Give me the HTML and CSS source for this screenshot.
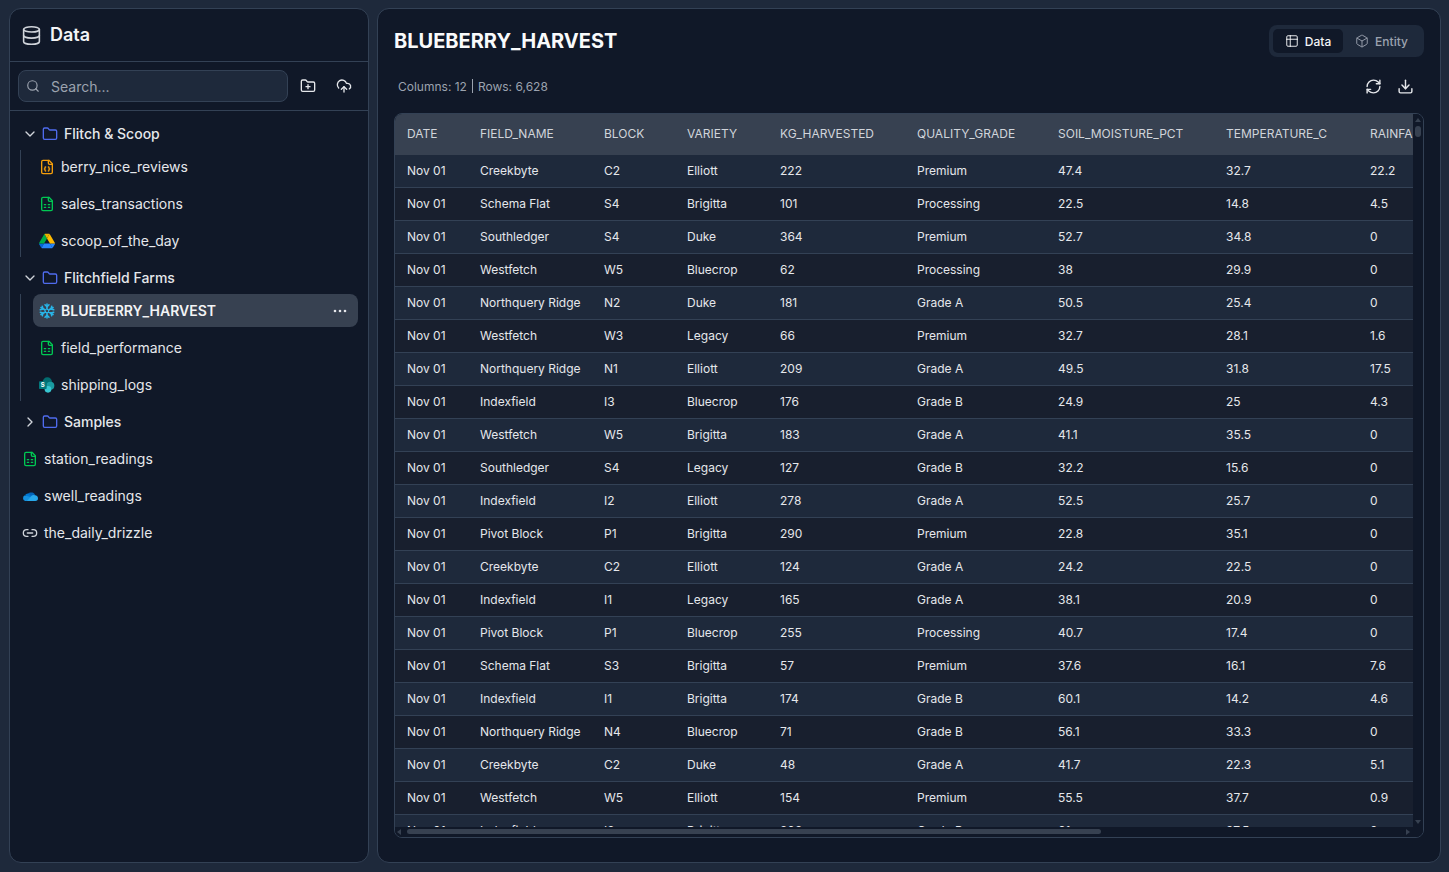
FILE: index.html
```html
<!DOCTYPE html>
<html lang="en">
<head>
<meta charset="utf-8">
<title>Data</title>
<link rel="stylesheet" href="styles.css">
</head>
<body>
<aside class="sidebar">
  <header class="side-head">
    <svg class="ico ico-title" viewBox="0 0 24 24"><ellipse cx="12" cy="5" rx="9" ry="3"/><path d="M3 5V19A9 3 0 0 0 21 19V5"/><path d="M3 12A9 3 0 0 0 21 12"/></svg>
    <h2>Data</h2>
  </header>
  <div class="search-row">
    <label class="search">
      <svg class="ico ico-search" viewBox="0 0 24 24"><circle cx="11" cy="11" r="8"/><path d="m21 21-4.3-4.3"/></svg>
      <input type="text" placeholder="Search...">
    </label>
    <button class="icon-btn"><svg class="ico ico-18" viewBox="0 0 24 24"><path d="M12 10v6"/><path d="M9 13h6"/><path d="M20 20a2 2 0 0 0 2-2V8a2 2 0 0 0-2-2h-7.9a2 2 0 0 1-1.69-.9L9.6 3.9A2 2 0 0 0 7.93 3H4a2 2 0 0 0-2 2v13a2 2 0 0 0 2 2Z"/></svg></button>
    <button class="icon-btn"><svg class="ico ico-18" viewBox="0 0 24 24"><path d="M12 13v8"/><path d="M4 14.899A7 7 0 1 1 15.71 8h1.79a4.5 4.5 0 0 1 2.5 8.242"/><path d="m8 17 4-4 4 4"/></svg></button>
  </div>
  <nav class="tree">
    <div class="row folder">
      <svg class="ico ico-chev" viewBox="0 0 24 24"><path d="m6 9 6 6 6-6"/></svg>
      <svg class="ico ico-folder" viewBox="0 0 24 24"><path d="M20 20a2 2 0 0 0 2-2V8a2 2 0 0 0-2-2h-7.9a2 2 0 0 1-1.69-.9L9.6 3.9A2 2 0 0 0 7.93 3H4a2 2 0 0 0-2 2v13a2 2 0 0 0 2 2Z"/></svg>
      <span>Flitch &amp; Scoop</span>
    </div>
    <div class="children">
      <div class="row leaf">
        <svg class="ico ico-json" viewBox="0 0 24 24"><path d="M15 2H6a2 2 0 0 0-2 2v16a2 2 0 0 0 2 2h12a2 2 0 0 0 2-2V7Z"/><path d="M14 2v4a2 2 0 0 0 2 2h4"/><path d="M10 12a1 1 0 0 0-1 1v1a1 1 0 0 1-1 1 1 1 0 0 1 1 1v1a1 1 0 0 0 1 1"/><path d="M14 18a1 1 0 0 0 1-1v-1a1 1 0 0 1 1-1 1 1 0 0 1-1-1v-1a1 1 0 0 0-1-1"/></svg>
        <span>berry_nice_reviews</span>
      </div>
      <div class="row leaf">
        <svg class="ico ico-sheet" viewBox="0 0 24 24"><path d="M15 2H6a2 2 0 0 0-2 2v16a2 2 0 0 0 2 2h12a2 2 0 0 0 2-2V7Z"/><path d="M14 2v4a2 2 0 0 0 2 2h4"/><path d="M8 13h2"/><path d="M14 13h2"/><path d="M8 17h2"/><path d="M14 17h2"/></svg>
        <span>sales_transactions</span>
      </div>
      <div class="row leaf">
        <svg class="logo" viewBox="0 0 87.3 78"><path d="M6.6 66.85l3.85 6.65c.8 1.4 1.95 2.5 3.3 3.3L27.5 53H0c0 1.55.4 3.1 1.2 4.5z" fill="#0066da"/><path d="M43.65 25L29.9 1.2c-1.35.8-2.5 1.9-3.3 3.3l-25.4 44A9.06 9.06 0 0 0 0 53h27.5z" fill="#00ac47"/><path d="M59.8 53H27.5L13.75 76.8c1.35.8 2.9 1.2 4.5 1.2h50.8c1.6 0 3.15-.45 4.5-1.2z" fill="#2684fc"/><path d="M73.55 76.8c1.35-.8 2.5-1.9 3.3-3.3l9.25-16c.8-1.4 1.2-2.95 1.2-4.5H59.8z" fill="#2684fc"/><path d="M43.65 25L57.4 1.2C56.05.4 54.5 0 52.9 0H34.4c-1.6 0-3.15.45-4.5 1.2z" fill="#e8b100"/><path d="M73.4 26.5l-12.7-22c-.8-1.4-1.95-2.5-3.3-3.3L43.65 25 59.8 53h27.45c0-1.55-.4-3.1-1.2-4.5z" fill="#ffba00"/></svg>
        <span>scoop_of_the_day</span>
      </div>
    </div>
    <div class="row folder">
      <svg class="ico ico-chev" viewBox="0 0 24 24"><path d="m6 9 6 6 6-6"/></svg>
      <svg class="ico ico-folder" viewBox="0 0 24 24"><path d="M20 20a2 2 0 0 0 2-2V8a2 2 0 0 0-2-2h-7.9a2 2 0 0 1-1.69-.9L9.6 3.9A2 2 0 0 0 7.93 3H4a2 2 0 0 0-2 2v13a2 2 0 0 0 2 2Z"/></svg>
      <span>Flitchfield Farms</span>
    </div>
    <div class="children">
      <div class="row leaf selected">
        <svg class="logo snow" viewBox="0 0 24 24"><path d="M12 1.5v21M2.9 6.75l18.2 10.5M2.9 17.25l18.2-10.5"/><path d="M9 2.6l3 3 3-3M9 21.4l3-3 3 3M1.9 10.1l4.1-1.1-1.1-4.1M22.1 13.9l-4.1 1.1 1.1 4.1M4.9 19.1l1.1-4.1-4.1-1.1M19.1 4.9l-1.1 4.1 4.1 1.1"/><path class="snow-core" d="M12 9l3 3-3 3-3-3z"/></svg>
        <span>BLUEBERRY_HARVEST</span>
        <svg class="dots" viewBox="0 0 16 16"><circle cx="3" cy="8" r="1.3"/><circle cx="8" cy="8" r="1.3"/><circle cx="13" cy="8" r="1.3"/></svg>
      </div>
      <div class="row leaf">
        <svg class="ico ico-sheet" viewBox="0 0 24 24"><path d="M15 2H6a2 2 0 0 0-2 2v16a2 2 0 0 0 2 2h12a2 2 0 0 0 2-2V7Z"/><path d="M14 2v4a2 2 0 0 0 2 2h4"/><path d="M8 13h2"/><path d="M14 13h2"/><path d="M8 17h2"/><path d="M14 17h2"/></svg>
        <span>field_performance</span>
      </div>
      <div class="row leaf">
        <svg class="logo" viewBox="0 0 24 24"><circle cx="12.5" cy="7.5" r="7" fill="#036c70"/><circle cx="17" cy="13" r="6" fill="#1a9ba1"/><circle cx="13.5" cy="18.5" r="5" fill="#37c6d0"/><rect x="0" y="6.5" width="11.5" height="11.5" rx="1.2" fill="#03787c"/><text class="sp-s" x="5.75" y="15.6" text-anchor="middle">S</text></svg>
        <span>shipping_logs</span>
      </div>
    </div>
    <div class="row folder closed">
      <svg class="ico ico-chev" viewBox="0 0 24 24"><path d="m9 18 6-6-6-6"/></svg>
      <svg class="ico ico-folder" viewBox="0 0 24 24"><path d="M20 20a2 2 0 0 0 2-2V8a2 2 0 0 0-2-2h-7.9a2 2 0 0 1-1.69-.9L9.6 3.9A2 2 0 0 0 7.93 3H4a2 2 0 0 0-2 2v13a2 2 0 0 0 2 2Z"/></svg>
      <span>Samples</span>
    </div>
    <div class="row leaf">
      <svg class="ico ico-sheet" viewBox="0 0 24 24"><path d="M15 2H6a2 2 0 0 0-2 2v16a2 2 0 0 0 2 2h12a2 2 0 0 0 2-2V7Z"/><path d="M14 2v4a2 2 0 0 0 2 2h4"/><path d="M8 13h2"/><path d="M14 13h2"/><path d="M8 17h2"/><path d="M14 17h2"/></svg>
      <span>station_readings</span>
    </div>
    <div class="row leaf">
      <svg class="logo" viewBox="0 0 24 16"><path d="M9.5 4.2A6.4 6.4 0 0 1 20 7.6L14 12 7 8.5z" fill="#0364b8"/><path d="M7.2 4.6A5 5 0 0 0 4.9 6.3L10 12l5.5-2.6-6-5.2a5 5 0 0 0-2.3.4z" fill="#0078d4"/><path d="M4.5 7A4.5 4.5 0 0 0 4.6 15.5H9L13 10z" fill="#1490df"/><path d="M19 7a5.4 5.4 0 0 0-6.3 2.4L7.4 15.5H20a4 4 0 0 0 4-4 4.5 4.5 0 0 0-5-4.5z" fill="#28a8ea"/></svg>
      <span>swell_readings</span>
    </div>
    <div class="row leaf">
      <svg class="ico ico-link" viewBox="0 0 24 24"><path d="M9 17H7A5 5 0 0 1 7 7h2"/><path d="M15 7h2a5 5 0 1 1 0 10h-2"/><path d="M8 12h8"/></svg>
      <span>the_daily_drizzle</span>
    </div>
  </nav>
</aside>

<main class="main">
  <header class="main-head">
    <h1>BLUEBERRY_HARVEST</h1>
    <div class="tabs">
      <button class="tab active"><svg class="ico ico-14" viewBox="0 0 24 24"><path d="M9 3H5a2 2 0 0 0-2 2v4m6-6h10a2 2 0 0 1 2 2v4M9 3v18m0 0h10a2 2 0 0 0 2-2V9M9 21H5a2 2 0 0 1-2-2V9m0 0h18"/></svg>Data</button>
      <button class="tab"><svg class="ico ico-14" viewBox="0 0 24 24"><path d="M21 8a2 2 0 0 0-1-1.73l-7-4a2 2 0 0 0-2 0l-7 4A2 2 0 0 0 3 8v8a2 2 0 0 0 1 1.73l7 4a2 2 0 0 0 2 0l7-4A2 2 0 0 0 21 16Z"/><path d="m3.3 7 8.7 5 8.7-5"/><path d="M12 22V12"/></svg>Entity</button>
    </div>
  </header>
  <div class="meta">
    <p class="stats"><span>Columns: 12</span><i class="sep"></i><span>Rows: 6,628</span></p>
    <div class="actions">
      <button class="icon-btn"><svg class="ico ico-18" viewBox="0 0 24 24"><path d="M3 12a9 9 0 0 1 9-9 9.75 9.75 0 0 1 6.74 2.74L21 8"/><path d="M21 3v5h-5"/><path d="M21 12a9 9 0 0 1-9 9 9.75 9.75 0 0 1-6.74-2.74L3 16"/><path d="M8 16H3v5"/></svg></button>
      <button class="icon-btn"><svg class="ico ico-18" viewBox="0 0 24 24"><path d="M21 15v4a2 2 0 0 1-2 2H5a2 2 0 0 1-2-2v-4"/><path d="m7 10 5 5 5-5"/><path d="M12 15V3"/></svg></button>
    </div>
  </div>
  <div class="table-wrap">
    <div class="viewport">
    <table>
      <thead>
        <tr><th>DATE</th><th>FIELD_NAME</th><th>BLOCK</th><th>VARIETY</th><th>KG_HARVESTED</th><th>QUALITY_GRADE</th><th>SOIL_MOISTURE_PCT</th><th>TEMPERATURE_C</th><th>RAINFALL_MM</th></tr>
      </thead>
      <tbody>
        <tr><td>Nov 01</td><td>Creekbyte</td><td>C2</td><td>Elliott</td><td>222</td><td>Premium</td><td>47.4</td><td>32.7</td><td>22.2</td></tr>
        <tr><td>Nov 01</td><td>Schema Flat</td><td>S4</td><td>Brigitta</td><td>101</td><td>Processing</td><td>22.5</td><td>14.8</td><td>4.5</td></tr>
        <tr><td>Nov 01</td><td>Southledger</td><td>S4</td><td>Duke</td><td>364</td><td>Premium</td><td>52.7</td><td>34.8</td><td>0</td></tr>
        <tr><td>Nov 01</td><td>Westfetch</td><td>W5</td><td>Bluecrop</td><td>62</td><td>Processing</td><td>38</td><td>29.9</td><td>0</td></tr>
        <tr><td>Nov 01</td><td>Northquery Ridge</td><td>N2</td><td>Duke</td><td>181</td><td>Grade A</td><td>50.5</td><td>25.4</td><td>0</td></tr>
        <tr><td>Nov 01</td><td>Westfetch</td><td>W3</td><td>Legacy</td><td>66</td><td>Premium</td><td>32.7</td><td>28.1</td><td>1.6</td></tr>
        <tr><td>Nov 01</td><td>Northquery Ridge</td><td>N1</td><td>Elliott</td><td>209</td><td>Grade A</td><td>49.5</td><td>31.8</td><td>17.5</td></tr>
        <tr><td>Nov 01</td><td>Indexfield</td><td>I3</td><td>Bluecrop</td><td>176</td><td>Grade B</td><td>24.9</td><td>25</td><td>4.3</td></tr>
        <tr><td>Nov 01</td><td>Westfetch</td><td>W5</td><td>Brigitta</td><td>183</td><td>Grade A</td><td>41.1</td><td>35.5</td><td>0</td></tr>
        <tr><td>Nov 01</td><td>Southledger</td><td>S4</td><td>Legacy</td><td>127</td><td>Grade B</td><td>32.2</td><td>15.6</td><td>0</td></tr>
        <tr><td>Nov 01</td><td>Indexfield</td><td>I2</td><td>Elliott</td><td>278</td><td>Grade A</td><td>52.5</td><td>25.7</td><td>0</td></tr>
        <tr><td>Nov 01</td><td>Pivot Block</td><td>P1</td><td>Brigitta</td><td>290</td><td>Premium</td><td>22.8</td><td>35.1</td><td>0</td></tr>
        <tr><td>Nov 01</td><td>Creekbyte</td><td>C2</td><td>Elliott</td><td>124</td><td>Grade A</td><td>24.2</td><td>22.5</td><td>0</td></tr>
        <tr><td>Nov 01</td><td>Indexfield</td><td>I1</td><td>Legacy</td><td>165</td><td>Grade A</td><td>38.1</td><td>20.9</td><td>0</td></tr>
        <tr><td>Nov 01</td><td>Pivot Block</td><td>P1</td><td>Bluecrop</td><td>255</td><td>Processing</td><td>40.7</td><td>17.4</td><td>0</td></tr>
        <tr><td>Nov 01</td><td>Schema Flat</td><td>S3</td><td>Brigitta</td><td>57</td><td>Premium</td><td>37.6</td><td>16.1</td><td>7.6</td></tr>
        <tr><td>Nov 01</td><td>Indexfield</td><td>I1</td><td>Brigitta</td><td>174</td><td>Grade B</td><td>60.1</td><td>14.2</td><td>4.6</td></tr>
        <tr><td>Nov 01</td><td>Northquery Ridge</td><td>N4</td><td>Bluecrop</td><td>71</td><td>Grade B</td><td>56.1</td><td>33.3</td><td>0</td></tr>
        <tr><td>Nov 01</td><td>Creekbyte</td><td>C2</td><td>Duke</td><td>48</td><td>Grade A</td><td>41.7</td><td>22.3</td><td>5.1</td></tr>
        <tr><td>Nov 01</td><td>Westfetch</td><td>W5</td><td>Elliott</td><td>154</td><td>Premium</td><td>55.5</td><td>37.7</td><td>0.9</td></tr>
        <tr><td>Nov 01</td><td>Indexfield</td><td>I2</td><td>Brigitta</td><td>202</td><td>Grade B</td><td>61</td><td>27.5</td><td>0</td></tr>
      </tbody>
    </table>
    </div>
    <div class="vbar"><i class="arrow up"></i><div class="vtrack"><i class="vthumb"></i></div><i class="arrow down"></i></div>
    <div class="hbar"><i class="arrow left"></i><div class="htrack"><i class="hthumb"></i></div><i class="arrow right"></i></div>
    <div class="corner"></div>
  </div>
</main>
</body>
</html>
```
FILE: styles.css
```css
* { box-sizing: border-box; }
html, body { height: 100%; margin: 0; }
body {
  display: flex;
  gap: 8px;
  padding: 8px 8px 9px 9px;
  background: #1e293b;
  color: #e5e7eb;
  font-family: Inter, "Liberation Sans", sans-serif;
  overflow: hidden;
}
h1, h2, p { margin: 0; }
button { font: inherit; color: inherit; background: none; border: 0; padding: 0; cursor: pointer; }
.ico { fill: none; stroke: currentColor; stroke-width: 2; stroke-linecap: round; stroke-linejoin: round; flex: none; }
.ico-18 { width: 18px; height: 18px; }
.ico-14 { width: 14px; height: 14px; stroke-width: 1.6; }
.logo { width: 16px; height: 16px; flex: none; }

.sidebar {
  width: 360px;
  flex: none;
  display: flex;
  flex-direction: column;
  background: #101828;
  border: 1px solid #334155;
  border-radius: 12px;
}
.side-head {
  height: 53px;
  display: flex;
  align-items: center;
  gap: 8px;
  padding: 0 11px 2px;
  border-bottom: 1px solid #334155;
}
.ico-title { width: 21px; height: 21px; margin-top: 2px; color: #d1d5db; stroke-width: 1.8; }
.side-head h2 { font-size: 18px; font-weight: 600; color: #f3f4f6; }
.search-row {
  height: 49px;
  display: flex;
  align-items: center;
  padding: 0 6px 0 8px;
  border-bottom: 1px solid #334155;
}
.search {
  width: 270px;
  height: 32px;
  display: flex;
  align-items: center;
  padding: 0 7px;
  background: #1e293b;
  border: 1px solid #334155;
  border-radius: 8px;
  margin-right: 2px;
}
.ico-search { width: 14px; height: 14px; color: #9ca3af; }
.search input {
  flex: 1;
  min-width: 0;
  margin-left: 11px;
  padding: 0;
  background: none;
  border: 0;
  outline: 0;
  color: #e5e7eb;
  font: 14px Inter, "Liberation Sans", sans-serif;
}
.search input::placeholder { color: #9ca3af; opacity: 1; }
.icon-btn { width: 36px; height: 32px; display: flex; align-items: center; justify-content: center; color: #e5e7eb; }
.search-row .icon-btn svg { width: 16px; height: 16px; }

.tree { padding: 6px 10px 0 6px; font-size: 14px; }
.row { height: 33px; display: flex; align-items: center; border-radius: 8px; padding-left: 6px; color: #e5e7eb; margin-bottom: 4px; }
.folder { margin-bottom: 0; font-weight: 500; }
.folder.closed { margin-bottom: 4px; }
.ico-chev { width: 16px; height: 16px; margin-right: 4px; color: #d1d5db; }
.ico-folder { width: 16px; height: 16px; margin-right: 6px; color: #4f6bed; stroke-width: 2; }
.leaf { gap: 6px; }
.leaf .ico { width: 16px; height: 16px; stroke-width: 2; }
.ico-json { color: #f59e0b; }
.ico-sheet { color: #00c853; }
.ico-link { color: #d1d5db; }
.children { margin: 0 0 4px 4px; border-left: 1px solid #334155; padding-left: 12px; }
.children .row:last-child { margin-bottom: 0; }
.selected { background: #374151; font-weight: 600; color: #f3f4f6; }
.selected span { flex: 1; }
.dots { width: 16px; height: 16px; fill: #e5e7eb; margin-right: 10px; flex: none; }
.snow { fill: none; stroke: #29b5e8; stroke-width: 2.3; stroke-linecap: round; stroke-linejoin: round; }
.snow-core { fill: #374151; stroke: #29b5e8; stroke-width: 1.4; }
.sp-s { font: 700 9px Inter, sans-serif; fill: #fff; }

.main {
  flex: 1;
  min-width: 0;
  display: flex;
  flex-direction: column;
  padding: 16px 16px 24px;
  background: #101828;
  border: 1px solid #334155;
  border-radius: 12px;
}
.main-head { height: 32px; display: flex; align-items: center; justify-content: space-between; flex: none; }
.main-head h1 { font-size: 20px; font-weight: 700; color: #f9fafb; }
.tabs { height: 32px; width: 155px; display: flex; align-items: center; padding: 4px; background: #1e293b; border-radius: 8px; }
.tab { height: 24px; width: 70px; display: flex; align-items: center; justify-content: center; gap: 6px; font-size: 12px; font-weight: 500; color: #9ca3af; border-radius: 5px; }
.tab + .tab { width: 77px; }
.tab.active { background: #101828; color: #f3f4f6; }
.meta { height: 32px; margin: 13px 0 11px; display: flex; align-items: center; justify-content: space-between; flex: none; }
.stats { display: flex; align-items: center; gap: 5px; padding-left: 4px; font-size: 12px; color: #9ca3af; }
.sep { width: 1px; height: 14px; background: #9ca3af; }
.actions { display: flex; margin-right: 3px; }
.actions .icon-btn { width: 32px; color: #e5e7eb; }
.actions svg { width: 17px; height: 17px; }

.table-wrap {
  flex: 1;
  min-height: 0;
  display: grid;
  grid-template-columns: minmax(0, 1fr) 10px;
  grid-template-rows: minmax(0, 1fr) 10px;
  overflow: hidden;
  background: #101828;
  border: 1px solid #334155;
  border-radius: 8px;
}
.viewport { overflow: hidden; min-width: 0; min-height: 0; }
.vbar { display: flex; flex-direction: column; align-items: center; background: #101828; }
.hbar { display: flex; align-items: center; background: #101828; }
.corner { background: #101828; }
.vtrack { flex: 1; width: 6px; }
.htrack { flex: 1; height: 5px; margin-bottom: 1px; }
.vthumb { display: block; width: 6px; height: 11px; background: #374151; border-radius: 3px; }
.hthumb { display: block; width: 694px; height: 5px; background: #374151; border-radius: 3px; }
.arrow { flex: none; display: flex; width: 0; height: 0; border-style: solid; border-color: transparent; }
.up { margin: 4px 0 4px; border-width: 0 3.5px 4px; border-bottom-color: #374151; }
.down { margin: 4px 0 3px; border-width: 4px 3.5px 0; border-top-color: #374151; }
.left { margin: 0 6px 0 2px; border-width: 3.5px 4px 3.5px 0; border-right-color: #374151; }
.right { margin: 0 3px 0 5px; border-width: 3.5px 0 3.5px 4px; border-left-color: #374151; }

table { border-collapse: separate; border-spacing: 0; table-layout: fixed; width: 1093px; font-size: 12px; }
th, td { text-align: left; padding: 0 12px 2px; white-space: nowrap; overflow: hidden; }
th { height: 41px; background: #374151; color: #d1d5db; font-weight: 400; }
td { height: 33px; border-bottom: 1px solid #334155; color: #e5e7eb; }
tbody tr:nth-child(odd) td { background: #1e293b; }
tbody tr:nth-child(even) td { background: #181f2e; }
th:nth-child(1) { width: 73px; }
th:nth-child(2) { width: 124px; }
th:nth-child(3) { width: 83px; }
th:nth-child(4) { width: 93px; }
th:nth-child(5) { width: 137px; }
th:nth-child(6) { width: 141px; }
th:nth-child(7) { width: 168px; }
th:nth-child(8) { width: 144px; }
th:nth-child(9) { width: 130px; }
```
